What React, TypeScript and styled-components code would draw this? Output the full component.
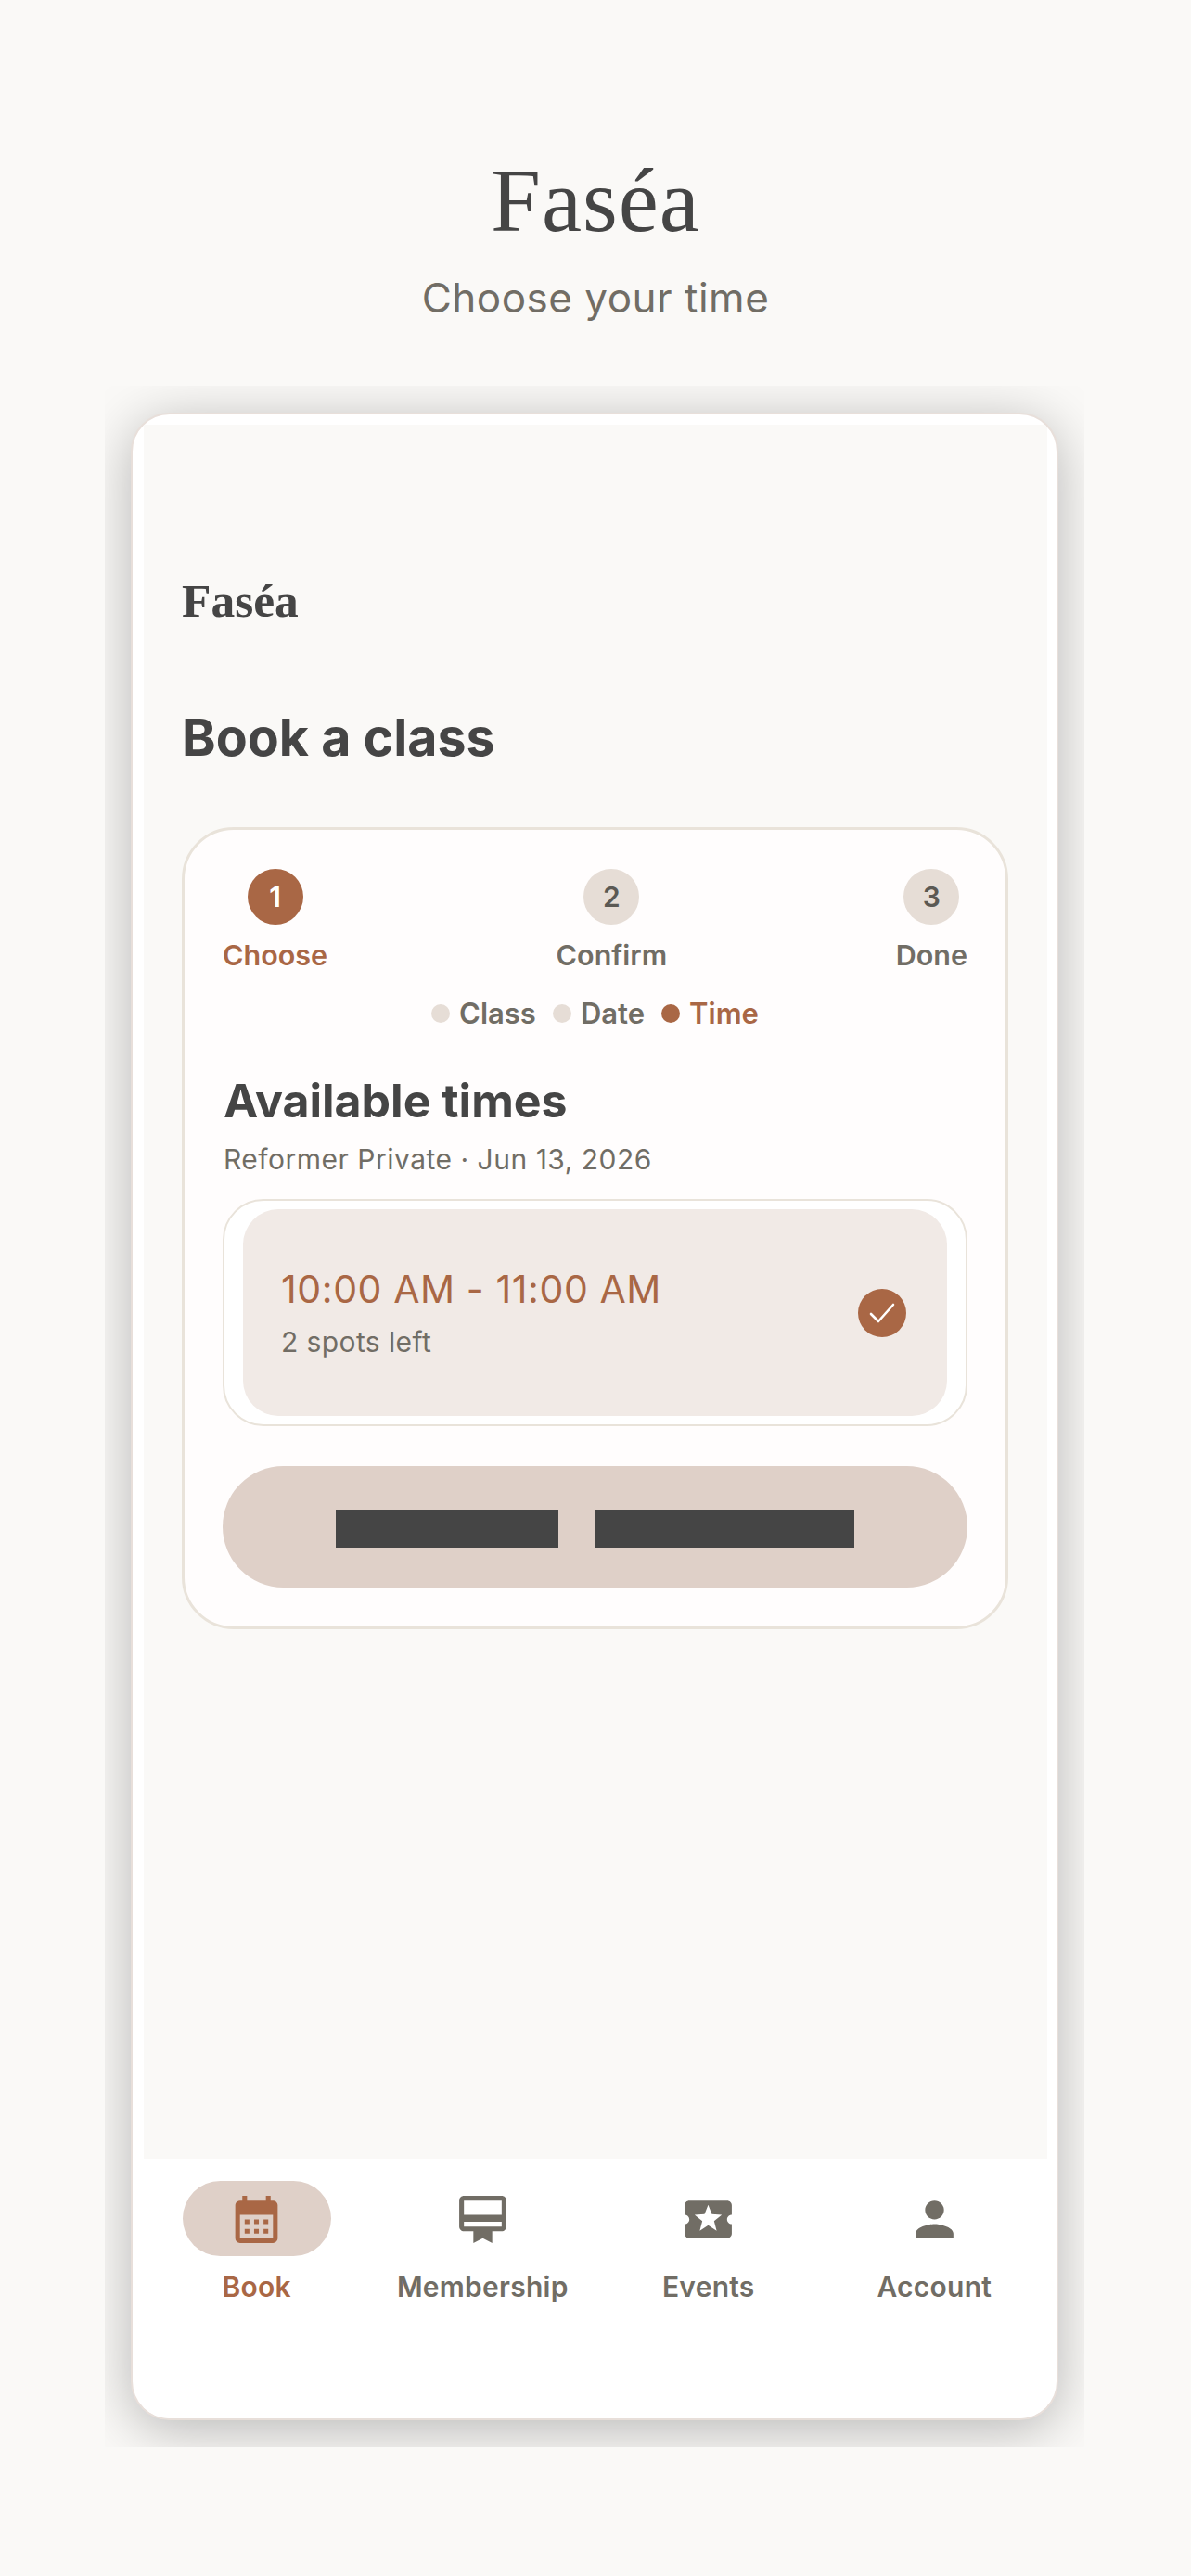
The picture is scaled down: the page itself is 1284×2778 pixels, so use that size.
import { Fragment } from "react";
import styled, { createGlobalStyle } from "styled-components";
import { MdCalendarMonth, MdCardMembership, MdLocalActivity, MdPerson } from "react-icons/md";

const GlobalStyle = createGlobalStyle`
  html, body {
    margin: 0;
    padding: 0;
    background: #faf9f7;
  }
  * {
    box-sizing: border-box;
  }
`;

const Page = styled.div`
  width: 1284px;
  height: 2778px;
  overflow: hidden;
  background: #faf9f7;
  font-family: Inter, "Noto Sans", sans-serif;
  color: #454545;
`;

const Header = styled.header`
  height: 416px;
  padding-top: 157px;
  text-align: center;
`;

const BrandTitle = styled.h1`
  margin: 0;
  font-family: "Liberation Serif", serif;
  font-size: 97px;
  font-weight: 400;
  line-height: 120px;
  letter-spacing: 1px;
  color: #454545;
`;

const Tagline = styled.p`
  margin: 16px 0 0;
  font-size: 44px;
  line-height: 56px;
  letter-spacing: 0.5px;
  color: #716d65;
`;

const Stage = styled.div`
  width: 1056px;
  height: 2223px;
  margin-left: 113px;
  padding: 29px 28px;
  overflow: hidden;
`;

const Phone = styled.div`
  display: flex;
  flex-direction: column;
  height: 100%;
  padding: 11px 10px 0 12px;
  overflow: hidden;
  border: 2px solid #e8dfda;
  border-radius: 42px;
  background: #fff;
  box-shadow: 0 10px 60px rgba(0, 0, 0, 0.27);
`;

const Screen = styled.main`
  flex: 1;
  padding: 160px 42px 0 41px;
  background: #faf9f7;
`;

const Logo = styled.div`
  font-family: "Liberation Serif", serif;
  font-size: 51.5px;
  font-weight: 700;
  line-height: 60px;
  color: #454545;
`;

const PageTitle = styled.h2`
  margin: 82px 0 0;
  font-size: 55.5px;
  font-weight: 700;
  line-height: 70px;
  color: #454545;
`;

const Card = styled.section`
  margin-top: 62px;
  height: 865px;
  padding: 42px 41px 0;
  border: 3px solid #e9e3da;
  border-radius: 56px;
  background: #fffdfd;
`;

const Stepper = styled.div`
  display: flex;
  justify-content: space-between;
`;

const Step = styled.div`
  display: flex;
  flex-direction: column;
  align-items: center;
  gap: 14px;
`;

const StepCircle = styled.div<{ $active?: boolean }>`
  display: flex;
  align-items: center;
  justify-content: center;
  width: 60px;
  height: 60px;
  border-radius: 50%;
  font-size: 30px;
  font-weight: 600;
  background: ${(p) => (p.$active ? "#a96745" : "#e6ddd6")};
  color: ${(p) => (p.$active ? "#fff" : "#5b5954")};
`;

const StepLabel = styled.div<{ $active?: boolean }>`
  font-size: 30.5px;
  font-weight: 600;
  line-height: 38px;
  color: ${(p) => (p.$active ? "#a96745" : "#716d65")};
`;

const Legend = styled.div`
  display: flex;
  justify-content: center;
  align-items: center;
  gap: 10px;
  margin-top: 25px;
`;

const LegendDot = styled.span<{ $active?: boolean }>`
  width: 20px;
  height: 20px;
  border-radius: 50%;
  background: ${(p) => (p.$active ? "#a96745" : "#e6ddd6")};
`;

const LegendText = styled.span<{ $active?: boolean }>`
  font-size: 31px;
  font-weight: 600;
  line-height: 38px;
  color: ${(p) => (p.$active ? "#a96745" : "#716d65")};
  &:not(:last-child) {
    margin-right: 8px;
  }
`;

const SectionTitle = styled.h3`
  margin: 44px 0 0 1px;
  font-size: 50px;
  font-weight: 700;
  line-height: 62px;
  color: #454545;
`;

const SectionSub = styled.p`
  margin: 13px 0 0 1px;
  font-size: 30px;
  line-height: 38px;
  letter-spacing: 0.5px;
  color: #716d65;
`;

const SlotList = styled.div`
  margin-top: 24px;
  height: 245px;
  padding: 9px 20px;
  border: 2px solid #e9e3da;
  border-radius: 44px;
  background: #fff;
`;

const Slot = styled.div`
  display: flex;
  align-items: center;
  justify-content: space-between;
  height: 223px;
  padding: 0 44px 0 41px;
  border-radius: 38px;
  background: #f1eae6;
`;

const SlotText = styled.div`
  padding-bottom: 2px;
`;

const SlotTime = styled.div`
  font-size: 41px;
  font-weight: 400;
  line-height: 52px;
  letter-spacing: 0.6px;
  color: #a96745;
`;

const SlotSpots = styled.div`
  margin-top: 12px;
  font-size: 30px;
  line-height: 38px;
  letter-spacing: 0.4px;
  color: #716d65;
`;

const CheckBadge = styled.div`
  display: flex;
  align-items: center;
  justify-content: center;
  width: 52px;
  height: 52px;
  border-radius: 50%;
  background: #a96745;
`;

const ConfirmButton = styled.div`
  display: flex;
  align-items: center;
  justify-content: center;
  gap: 39px;
  margin-top: 43px;
  height: 131px;
  padding-top: 4px;
  border-radius: 66px;
  background: #dfd0c8;
`;

const MaskedWord = styled.span<{ $width: number }>`
  width: ${(p) => p.$width}px;
  height: 41px;
  background: #454545;
`;

const Nav = styled.nav`
  display: grid;
  grid-template-columns: repeat(4, 1fr);
  height: 280px;
  padding-top: 24px;
  background: #fff;
`;

const NavItem = styled.div`
  display: flex;
  flex-direction: column;
  align-items: center;
  gap: 14px;
`;

const NavIcon = styled.div<{ $active?: boolean }>`
  display: flex;
  align-items: center;
  justify-content: center;
  width: 160px;
  height: 81px;
  padding-top: 2px;
  border-radius: 41px;
  background: ${(p) => (p.$active ? "#dfd0c8" : "transparent")};
  color: ${(p) => (p.$active ? "#a96745" : "#716d65")};
`;

const NavLabel = styled.div<{ $active?: boolean }>`
  font-size: 30px;
  font-weight: 600;
  line-height: 38px;
  letter-spacing: 0.25px;
  color: ${(p) => (p.$active ? "#a96745" : "#716d65")};
`;

const steps = [
  { n: 1, label: "Choose", active: true },
  { n: 2, label: "Confirm" },
  { n: 3, label: "Done" },
];

const legend = [
  { label: "Class" },
  { label: "Date" },
  { label: "Time", active: true },
];

const navItems = [
  { label: "Book", Icon: MdCalendarMonth, active: true },
  { label: "Membership", Icon: MdCardMembership },
  { label: "Events", Icon: MdLocalActivity },
  { label: "Account", Icon: MdPerson },
];

export default function App() {
  return (
    <Page>
      <GlobalStyle />
      <Header>
        <BrandTitle>Faséa</BrandTitle>
        <Tagline>Choose your time</Tagline>
      </Header>
      <Stage>
        <Phone>
          <Screen>
            <Logo>Faséa</Logo>
            <PageTitle>Book a class</PageTitle>
            <Card>
              <Stepper>
                {steps.map((s) => (
                  <Step key={s.n}>
                    <StepCircle $active={s.active}>{s.n}</StepCircle>
                    <StepLabel $active={s.active}>{s.label}</StepLabel>
                  </Step>
                ))}
              </Stepper>
              <Legend>
                {legend.map((l) => (
                  <Fragment key={l.label}>
                    <LegendDot $active={l.active} />
                    <LegendText $active={l.active}>{l.label}</LegendText>
                  </Fragment>
                ))}
              </Legend>
              <SectionTitle>Available times</SectionTitle>
              <SectionSub>Reformer Private · Jun 13, 2026</SectionSub>
              <SlotList>
                <Slot>
                  <SlotText>
                    <SlotTime>10:00 AM - 11:00 AM</SlotTime>
                    <SlotSpots>2 spots left</SlotSpots>
                  </SlotText>
                  <CheckBadge>
                    <svg width="32" height="32" viewBox="0 0 32 32" fill="none">
                      <path d="M4 17l8 8L28 7" stroke="#fff" strokeWidth="2.6" strokeLinecap="round" strokeLinejoin="round" />
                    </svg>
                  </CheckBadge>
                </Slot>
              </SlotList>
              <ConfirmButton>
                <MaskedWord $width={240} />
                <MaskedWord $width={280} />
              </ConfirmButton>
            </Card>
          </Screen>
          <Nav>
            {navItems.map(({ label, Icon, active }) => (
              <NavItem key={label}>
                <NavIcon $active={active}>
                  <Icon size={61} />
                </NavIcon>
                <NavLabel $active={active}>{label}</NavLabel>
              </NavItem>
            ))}
          </Nav>
        </Phone>
      </Stage>
    </Page>
  );
}
